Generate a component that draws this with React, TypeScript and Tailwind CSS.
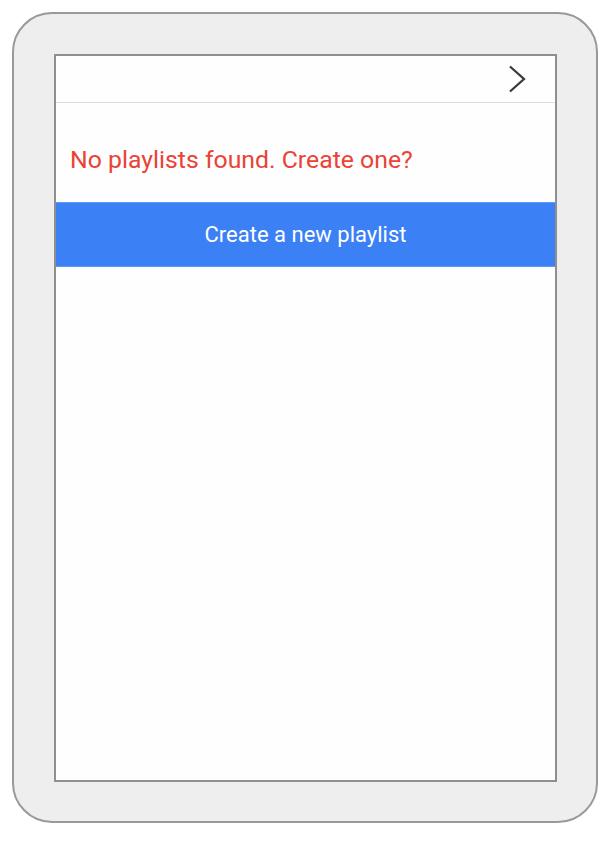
export default function App() {
  return (
    <div className="w-[614px] h-[842px] bg-white p-[12px] font-['Roboto',sans-serif]">
      <div className="w-[586px] h-[811px] rounded-[40px] border-2 border-[#999999] bg-[#eeeeee] pt-[40px] pl-[40px]">
        <div className="w-[503px] h-[728px] border-2 border-[#8f8f8f] bg-[#fefefe] flex flex-col">
          <div className="h-[47px] border-b border-[#dddddd] flex items-center justify-end pr-[29px]">
            <svg width="18" height="28" viewBox="0 0 18 28" fill="none">
              <path d="M2 1.5 L16 14 L2 26.5" stroke="#3a3a3a" strokeWidth="2.3" />
            </svg>
          </div>
          <div className="h-[99px] flex items-center pl-[14px] pt-[14px] text-[24.8px] text-[#ea4335]">
            No playlists found. Create one?
          </div>
          <button className="h-[65px] w-full bg-[#3b80f5] text-white text-[22px] border-y border-[#5c9cf8]">
            Create a new playlist
          </button>
        </div>
      </div>
    </div>
  );
}
